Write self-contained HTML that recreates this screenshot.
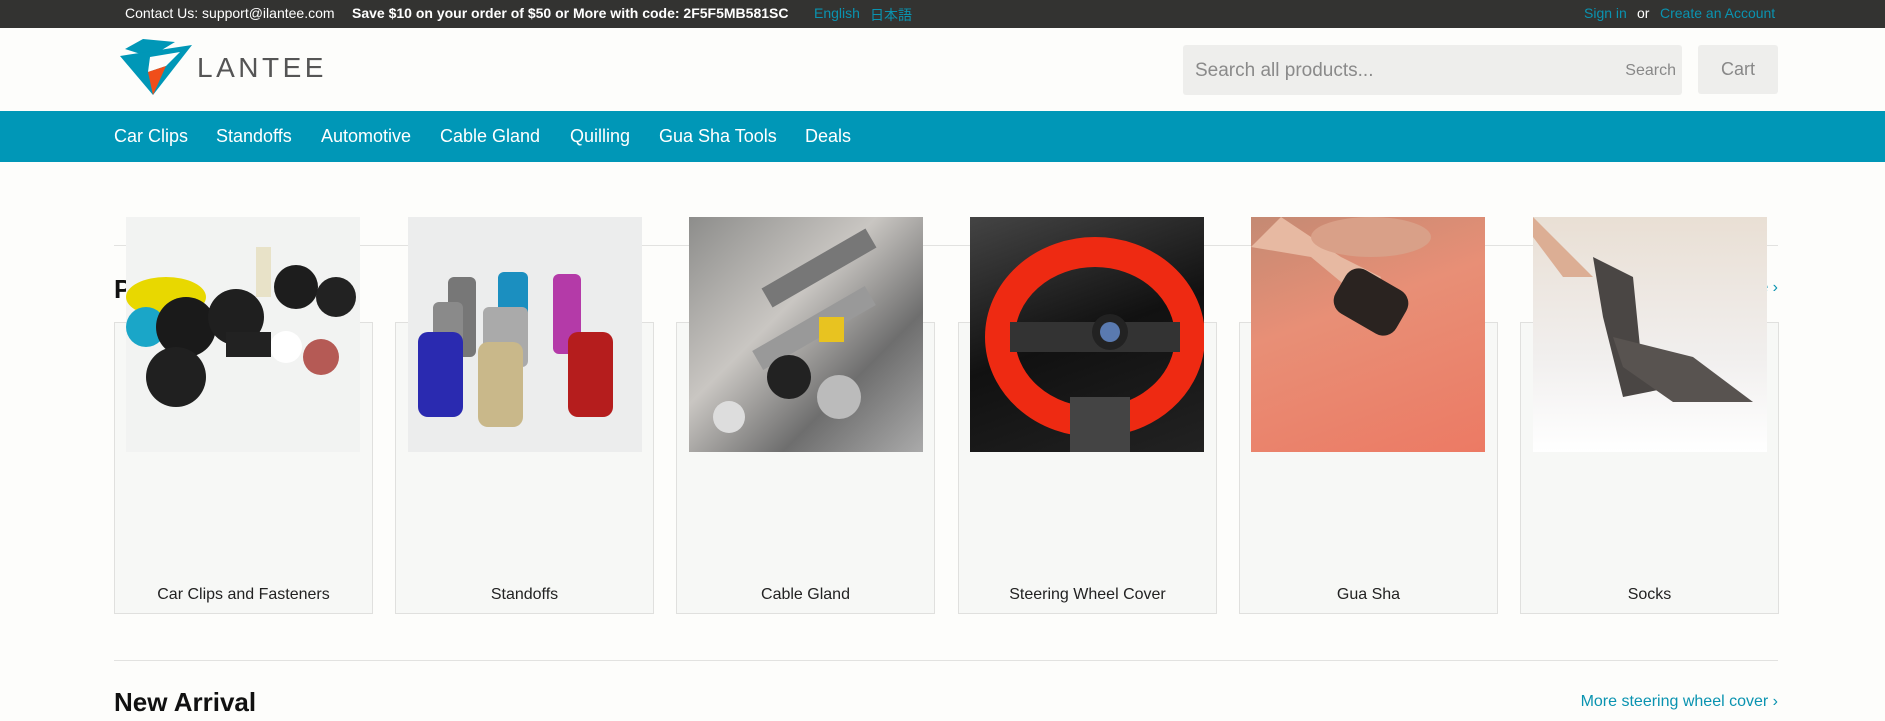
<!DOCTYPE html>
<html><head><meta charset="utf-8"><style>
*{margin:0;padding:0;box-sizing:border-box}
body{width:1885px;height:721px;overflow:hidden;background:#fdfdfb;font-family:"Liberation Sans","Noto Sans CJK JP",sans-serif;position:relative}
.top{position:absolute;left:0;top:0;width:1885px;height:28px;background:#333331;color:#fff;font-size:14px}
.top span{position:absolute;top:5px;white-space:nowrap}
.t{color:#0a93b0}
.nav{position:absolute;top:111px;left:0;width:1885px;height:51px;background:#0097b7}
.nav span{position:absolute;top:15px;color:#fff;font-size:18px}
.search{position:absolute;left:1183px;top:45px;width:499px;height:50px;background:#eeeeec;border-radius:3px}
.search .p{position:absolute;left:12px;top:15px;font-size:19px;color:#8a8a8a}
.search .b{position:absolute;right:6px;top:17px;font-size:16px;color:#888}
.cart{position:absolute;left:1698px;top:45px;width:80px;height:49px;background:#eeeeec;border-radius:3px;font-size:18px;color:#888;text-align:center;line-height:48px}
.hr{position:absolute;left:114px;width:1664px;height:1px;background:#e2e2e0}
h2{position:absolute;font-size:26px;font-weight:bold;color:#111}
.card{position:absolute;top:322px;width:259px;height:292px;background:#f7f8f6;border:1px solid #e0e0de}
.card .l{position:absolute;left:0;right:0;top:263px;text-align:center;font-size:16px;color:#222}
.img{position:absolute;top:217px;width:234px;height:235px;overflow:hidden}
.more{position:absolute;font-size:16px;color:#0a93b0}
</style></head><body>
<div class="top">
<span style="left:125px">Contact Us: support@ilantee.com</span>
<span style="left:352px;font-weight:bold">Save $10 on your order of $50 or More with code: 2F5F5MB581SC</span>
<span class="t" style="left:814px">English</span><span class="t" style="left:870px">日本語</span>
<span class="t" style="left:1584px">Sign in</span><span style="left:1637px">or</span><span class="t" style="left:1660px">Create an Account</span>
</div>
<svg style="position:absolute;left:0;top:0" width="200" height="110">
<polygon points="125,49 143,39 175,42 150,57" fill="#0097b7"/>
<polygon points="120,56 192,45 153,95" fill="#0097b7"/>
<polygon points="150,57 180,52 166,66 148,72" fill="#fdfdfb"/>
<polygon points="148,72 166,66 153,95" fill="#f04e1a"/>
</svg>
<div style="position:absolute;left:197px;top:52px;font-size:28px;color:#555;letter-spacing:3.5px">LANTEE</div>
<div class="search"><span class="p">Search all products...</span><span class="b">Search</span></div>
<div class="cart">Cart</div>
<div class="nav">
<span style="left:114px">Car Clips</span><span style="left:216px">Standoffs</span><span style="left:321px">Automotive</span><span style="left:440px">Cable Gland</span><span style="left:570px">Quilling</span><span style="left:659px">Gua Sha Tools</span><span style="left:805px">Deals</span>
</div>
<div class="hr" style="top:245px"></div>
<h2 style="left:114px;top:274px">Popular Collections</h2>
<div class="more" style="right:107px;top:279px">More ›</div>
<div class="card" style="left:114px"><div class="l">Car Clips and Fasteners</div></div>
<div class="card" style="left:395px"><div class="l">Standoffs</div></div>
<div class="card" style="left:676px"><div class="l">Cable Gland</div></div>
<div class="card" style="left:958px"><div class="l">Steering Wheel Cover</div></div>
<div class="card" style="left:1239px"><div class="l">Gua Sha</div></div>
<div class="card" style="left:1520px"><div class="l">Socks</div></div>

<div class="img" style="left:126px;background:#f2f3f2">
<svg width="234" height="235"><ellipse cx="40" cy="80" rx="40" ry="20" fill="#e8d800"/><ellipse cx="20" cy="110" rx="20" ry="20" fill="#1aa6c8"/><circle cx="60" cy="110" r="30" fill="#1a1a1a"/><circle cx="50" cy="160" r="30" fill="#202020"/><circle cx="110" cy="100" r="28" fill="#1f1f1f"/><circle cx="170" cy="70" r="22" fill="#1d1d1d"/><circle cx="210" cy="80" r="20" fill="#222"/><circle cx="160" cy="130" r="16" fill="#fff"/><circle cx="195" cy="140" r="18" fill="#b55a55"/><rect x="100" y="115" width="45" height="25" fill="#222"/><rect x="130" y="30" width="15" height="50" fill="#e8e2c8"/></svg></div>
<div class="img" style="left:408px;background:#eceded">
<svg width="234" height="235"><rect x="40" y="60" width="28" height="80" rx="6" fill="#777"/><rect x="90" y="55" width="30" height="70" rx="6" fill="#1b8fc0"/><rect x="145" y="57" width="28" height="80" rx="6" fill="#b43aa8"/><rect x="25" y="85" width="30" height="70" rx="6" fill="#8a8a8a"/><rect x="75" y="90" width="45" height="60" rx="6" fill="#aaa"/><rect x="10" y="115" width="45" height="85" rx="10" fill="#2a2ab0"/><rect x="70" y="125" width="45" height="85" rx="10" fill="#c9b88a"/><rect x="160" y="115" width="45" height="85" rx="10" fill="#b51d1d"/></svg></div>
<div class="img" style="left:689px;background:linear-gradient(135deg,#8d8d8b,#c9c6c2 40%,#6e6e6e 70%,#aaa)">
<svg width="234" height="235"><rect x="70" y="40" width="120" height="22" transform="rotate(-30 130 51)" fill="#777"/><rect x="60" y="100" width="130" height="22" transform="rotate(-30 125 111)" fill="#999"/><circle cx="100" cy="160" r="22" fill="#222"/><circle cx="150" cy="180" r="22" fill="#bbb"/><circle cx="40" cy="200" r="16" fill="#ddd"/><rect x="130" y="100" width="25" height="25" fill="#e8c320"/></svg></div>
<div class="img" style="left:970px;background:linear-gradient(160deg,#444 0%,#111 50%,#222)">
<svg width="234" height="235"><ellipse cx="125" cy="120" rx="95" ry="85" fill="none" stroke="#ee2a12" stroke-width="30"/><rect x="40" y="105" width="170" height="30" fill="#333"/><circle cx="140" cy="115" r="18" fill="#222"/><circle cx="140" cy="115" r="10" fill="#5a7ab0"/><rect x="100" y="180" width="60" height="55" fill="#444"/></svg></div>
<div class="img" style="left:1251px;background:linear-gradient(160deg,#c48a73 0%,#e88f76 40%,#ec7a64 100%)">
<svg width="234" height="235"><path d="M30 0 L90 40 L130 60 L120 90 L60 40 L0 30Z" fill="#e7b9a2"/><rect x="85" y="60" width="70" height="50" rx="15" transform="rotate(30 120 85)" fill="#2a2320"/><ellipse cx="120" cy="20" rx="60" ry="20" fill="#d9a088"/></svg></div>
<div class="img" style="left:1533px;background:linear-gradient(180deg,#e9dfd4,#f1efee 60%,#fff)">
<svg width="234" height="235"><path d="M60 40 L100 60 L110 160 L140 170 L90 180 L70 100Z" fill="#4a4644"/><path d="M80 120 L160 140 L220 185 L140 185 L90 150Z" fill="#585350"/><path d="M0 0 L40 40 L60 60 L30 60 L0 20Z" fill="#dcae94"/></svg></div>

<div class="hr" style="top:660px"></div>
<h2 style="left:114px;top:687px">New Arrival</h2>
<div class="more" style="right:107px;top:693px">More steering wheel cover ›</div>
</body></html>
